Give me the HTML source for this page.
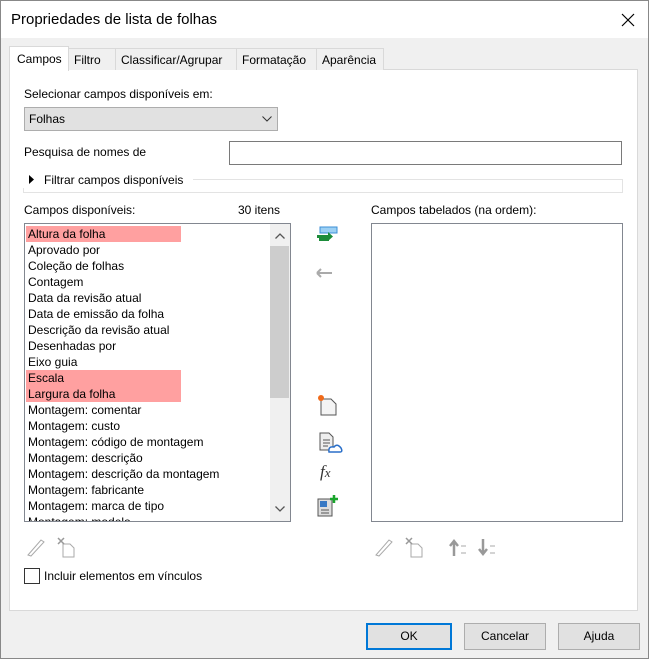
<!DOCTYPE html>
<html><head><style>
*{box-sizing:border-box}
body{margin:0;width:649px;height:659px;overflow:hidden;background:#f0f0f0;font-family:"Liberation Sans",sans-serif;font-size:12px;color:#000;position:relative}
.a{position:absolute}
.title{left:0;top:0;width:649px;height:38px;background:#fff;border:1px solid #888;border-bottom:none}
.title span{position:absolute;left:10px;top:10px;font-size:15px}
.tab{top:48px;height:22px;border:1px solid #d9d9d9;border-bottom:none;background:#f0f0f0;padding:4px 5px 0;white-space:nowrap}
.panel{left:9px;top:69px;width:629px;height:542px;background:#fff;border:1px solid #d9d9d9}
.list{background:#fff;border:1px solid #828790}
.item{position:absolute;left:3px;height:16px;line-height:16px;white-space:nowrap}
.hl{background:#ffa0a0;width:155px;left:1px;padding-left:2px}
.btn{top:623px;height:27px;background:#e1e1e1;border:1px solid #adadad;text-align:center;line-height:25px}
</style></head><body>
<div class="a title"><span>Propriedades de lista de folhas</span>
<svg class="a" style="left:620px;top:12px" width="14" height="14"><path d="M1 1L13 13M13 1L1 13" stroke="#000" stroke-width="1.2"/></svg></div>
<div class="a" style="left:0;top:38px;width:1px;height:621px;background:#888"></div>
<div class="a" style="left:648px;top:38px;width:1px;height:621px;background:#888"></div>
<div class="a" style="left:0;top:658px;width:649px;height:1px;background:#888"></div>
<div class="a panel"></div>
<div class="a tab" style="left:68px;width:48px">Filtro</div>
<div class="a tab" style="left:115px;width:122px">Classificar/Agrupar</div>
<div class="a tab" style="left:236px;width:81px">Formatação</div>
<div class="a tab" style="left:316px;width:68px">Aparência</div>
<div class="a tab" style="left:9px;top:46px;height:25px;width:60px;background:#fff;padding-top:5px;padding-left:7px">Campos</div>
<div class="a" style="left:24px;top:87px">Selecionar campos disponíveis em:</div>
<div class="a" style="left:24px;top:107px;width:254px;height:24px;background:#e1e1e1;border:1px solid #adadad;padding:4px 4px">Folhas
<svg class="a" style="left:237px;top:8px" width="10" height="6"><path d="M0.5 0.5L5 5L9.5 0.5" stroke="#333" fill="none"/></svg></div>
<div class="a" style="left:24px;top:145px">Pesquisa de nomes de</div>
<div class="a" style="left:229px;top:141px;width:393px;height:24px;border:1px solid #7a7a7a;background:#fff"></div>
<div class="a" style="left:23px;top:179px;width:600px;height:14px;border:1px solid #e3e3e3"></div>
<div class="a" style="left:23px;top:171px;width:170px;height:17px;background:#fff"></div>
<svg class="a" style="left:29px;top:175px" width="6" height="9"><path d="M0 0L5 4.5L0 9Z"/></svg>
<div class="a" style="left:44px;top:173px;background:#fff">Filtrar campos disponíveis</div>
<div class="a" style="left:24px;top:203px">Campos disponíveis:</div>
<div class="a" style="left:238px;top:203px">30 itens</div>
<div class="a" style="left:371px;top:203px">Campos tabelados (na ordem):</div>
<div class="a list" style="left:24px;top:223px;width:267px;height:299px;overflow:hidden">
<div class="item hl" style="top:2px">Altura da folha</div>
<div class="item" style="top:18px">Aprovado por</div>
<div class="item" style="top:34px">Coleção de folhas</div>
<div class="item" style="top:50px">Contagem</div>
<div class="item" style="top:66px">Data da revisão atual</div>
<div class="item" style="top:82px">Data de emissão da folha</div>
<div class="item" style="top:98px">Descrição da revisão atual</div>
<div class="item" style="top:114px">Desenhadas por</div>
<div class="item" style="top:130px">Eixo guia</div>
<div class="item hl" style="top:146px">Escala</div>
<div class="item hl" style="top:162px">Largura da folha</div>
<div class="item" style="top:178px">Montagem: comentar</div>
<div class="item" style="top:194px">Montagem: custo</div>
<div class="item" style="top:210px">Montagem: código de montagem</div>
<div class="item" style="top:226px">Montagem: descrição</div>
<div class="item" style="top:242px">Montagem: descrição da montagem</div>
<div class="item" style="top:258px">Montagem: fabricante</div>
<div class="item" style="top:274px">Montagem: marca de tipo</div>
<div class="item" style="top:290px">Montagem: modelo</div>
<div class="a" style="left:245px;top:0;width:20px;height:297px;background:#f0f0f0"></div>
<div class="a" style="left:245px;top:22px;width:19px;height:152px;background:#cdcdcd"></div>
<svg class="a" style="left:250px;top:9px" width="10" height="6"><path d="M0.5 5.5L5 1L9.5 5.5" stroke="#555" fill="none" stroke-width="1.3"/></svg>
<svg class="a" style="left:250px;top:282px" width="10" height="6"><path d="M0.5 0.5L5 5L9.5 0.5" stroke="#555" fill="none" stroke-width="1.3"/></svg>
</div>
<div class="a list" style="left:371px;top:223px;width:252px;height:299px"></div>
<svg class="a" style="left:316px;top:226px" width="22" height="22"><rect x="4" y="1" width="17" height="6" fill="#9cd0f4" stroke="#3c8fd6"/><rect x="1" y="9" width="14" height="3" fill="#1c8c3a"/><path d="M12 6L17 10.5L12 15Z" fill="#1c8c3a"/><rect x="3" y="12" width="10" height="3" fill="#1c8c3a"/></svg>
<svg class="a" style="left:316px;top:268px" width="18" height="10"><path d="M1 5H16M1 5L5 1M1 5L5 9" stroke="#aaa" stroke-width="2" fill="none"/></svg>
<svg class="a" style="left:316px;top:394px" width="22" height="22"><path d="M5 5H15L20 10V21H5Z" fill="#f4f4f4" stroke="#555"/><circle cx="5" cy="4" r="3" fill="#f06a1a"/></svg>
<svg class="a" style="left:319px;top:432px" width="24" height="22"><path d="M1 1H10L14 5V18H1Z" fill="#eee" stroke="#555"/><path d="M4 8H11M4 11H11M4 14H9" stroke="#555"/><path d="M10 20Q9 14 15 15Q18 11 22 16Q24 20 21 20Z" fill="#fff" stroke="#2a6fc9" stroke-width="1.5"/></svg>
<div class="a" style="left:320px;top:462px;font-family:'Liberation Serif',serif;font-style:italic;font-size:17px;color:#333">f<span style="font-size:13px">x</span></div>
<svg class="a" style="left:317px;top:495px" width="22" height="22"><rect x="1" y="4" width="14" height="17" fill="#ddd" stroke="#555"/><rect x="3" y="6" width="7" height="6" fill="#3778c4"/><path d="M4 15H12M4 18H12" stroke="#555"/><path d="M17 0V8M13 4H21" stroke="#1aa52c" stroke-width="2.5"/></svg>
<svg class="a" style="left:26px;top:536px" width="52" height="22" stroke="#aaa" fill="none"><path d="M2 19L15 4L18 6L5 20Z"/><path d="M37 8H44L48 12V21H37Z"/><path d="M32 2L38 8M38 2L32 8" stroke-width="1.5" stroke="#999"/></svg>
<svg class="a" style="left:374px;top:536px" width="130" height="22" stroke="#aaa" fill="none"><path d="M2 19L15 4L18 6L5 20Z"/><path d="M37 8H44L48 12V21H37Z"/><path d="M32 2L38 8M38 2L32 8" stroke-width="1.5" stroke="#999"/><path d="M80 20V6M76 10L80 5L84 10" stroke-width="2.5" stroke="#999"/><path d="M87 10H92M87 17H92"/><path d="M109 3V17M105 13L109 18L113 13" stroke-width="2.5" stroke="#999"/><path d="M116 10H121M116 17H121"/></svg>
<div class="a" style="left:24px;top:568px;width:16px;height:16px;border:1px solid #333;background:#fff"></div>
<div class="a" style="left:44px;top:569px">Incluir elementos em vínculos</div>
<div class="a btn" style="left:366px;width:86px;border:2px solid #0078d7;line-height:23px">OK</div>
<div class="a btn" style="left:464px;width:82px">Cancelar</div>
<div class="a btn" style="left:558px;width:82px">Ajuda</div>
</body></html>
